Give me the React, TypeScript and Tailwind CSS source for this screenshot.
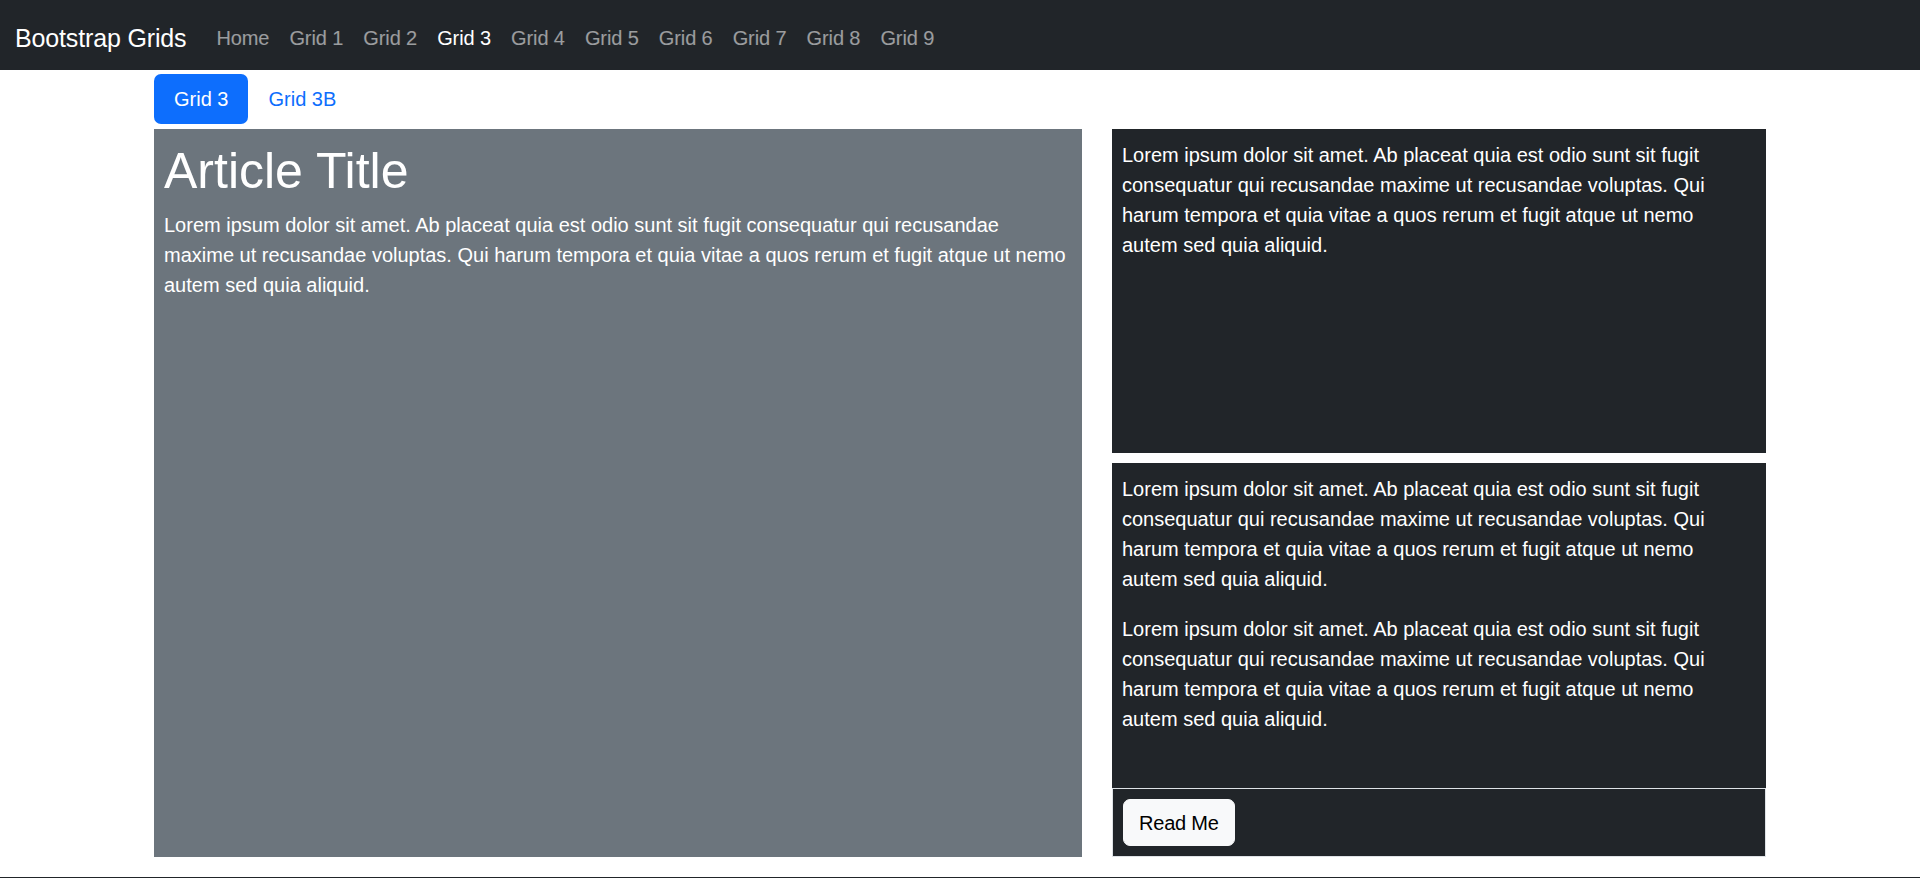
import React from 'react';

const navLinks = ['Home', 'Grid 1', 'Grid 2', 'Grid 3', 'Grid 4', 'Grid 5', 'Grid 6', 'Grid 7', 'Grid 8', 'Grid 9'];

function Lorem() {
  // hard breaks keep the wrap of the reference
  return (
    <>
      Lorem ipsum dolor sit amet. Ab placeat quia est odio sunt sit fugit
      <br />
      consequatur qui recusandae maxime ut recusandae voluptas. Qui
      <br />
      harum tempora et quia vitae a quos rerum et fugit atque ut nemo
      <br />
      autem sed quia aliquid.
    </>
  );
}

export default function App() {
  return (
    <div className="bg-white text-[20px] leading-[30px] text-[#212529]" style={{ fontFamily: '"Liberation Sans", Arial, sans-serif' }}>
      {/* navbar */}
      <nav className="h-[70px] bg-[#212529] flex items-center px-[15px] pt-[5px]">
        <span className="text-[25px] text-white mr-[20px] tracking-[-0.15px]">Bootstrap Grids</span>
        <ul className="flex tracking-[-0.1px]">
          {navLinks.map((link) => (
            <li key={link}>
              <a
                href="#"
                className={`block px-[10px] py-[10px] ${link === 'Grid 3' ? 'text-white' : 'text-white/55'}`}
              >
                {link}
              </a>
            </li>
          ))}
        </ul>
      </nav>

      <div className="w-[1612px] mx-auto">
        {/* pills */}
        <ul className="flex pt-[4px]">
          <li>
            <a href="#" className="block px-[20px] py-[10px] bg-[#0d6efd] text-white rounded-[7px]">
              Grid 3
            </a>
          </li>
          <li>
            <a href="#" className="block px-[20px] py-[10px] text-[#0d6efd]">
              Grid 3B
            </a>
          </li>
        </ul>

        <div className="grid grid-cols-[928px_654px] gap-[30px] mt-[5px]">
          {/* article */}
          <div className="bg-[#6c757d] text-white px-[10px] pt-[11px] pb-[10px]">
            <h1 className="text-[50px] leading-[60px] mt-[1px] mb-[9px]">Article Title</h1>
            <p>
              Lorem ipsum dolor sit amet. Ab placeat quia est odio sunt sit fugit consequatur qui recusandae
              <br />
              maxime ut recusandae voluptas. Qui harum tempora et quia vitae a quos rerum et fugit atque ut nemo
              <br />
              autem sed quia aliquid.
            </p>
          </div>

          {/* side cards */}
          <div className="flex flex-col gap-[10px]">
            <div className="h-[324px] bg-[#212529] text-white px-[10px] pt-[11px]">
              <p>
                <Lorem />
              </p>
            </div>
            <div className="h-[394px] flex flex-col bg-[#212529] text-white">
              <div className="flex-1 px-[10px] pt-[11px]">
                <p className="mb-[20px]">
                  <Lorem />
                </p>
                <p className="mb-[20px]">
                  <Lorem />
                </p>
              </div>
              <div className="border border-[#dee2e6] p-[10px]">
                <button
                  type="button"
                  className="px-[15px] py-[7.5px] bg-[#f8f9fa] border border-[#f8f9fa] text-black rounded-[7px] leading-[30px] tracking-[-0.2px]"
                >
                  Read Me
                </button>
              </div>
            </div>
          </div>
        </div>
      </div>

      <div className="mt-[20px] h-px bg-[#212529]"></div>
    </div>
  );
}
